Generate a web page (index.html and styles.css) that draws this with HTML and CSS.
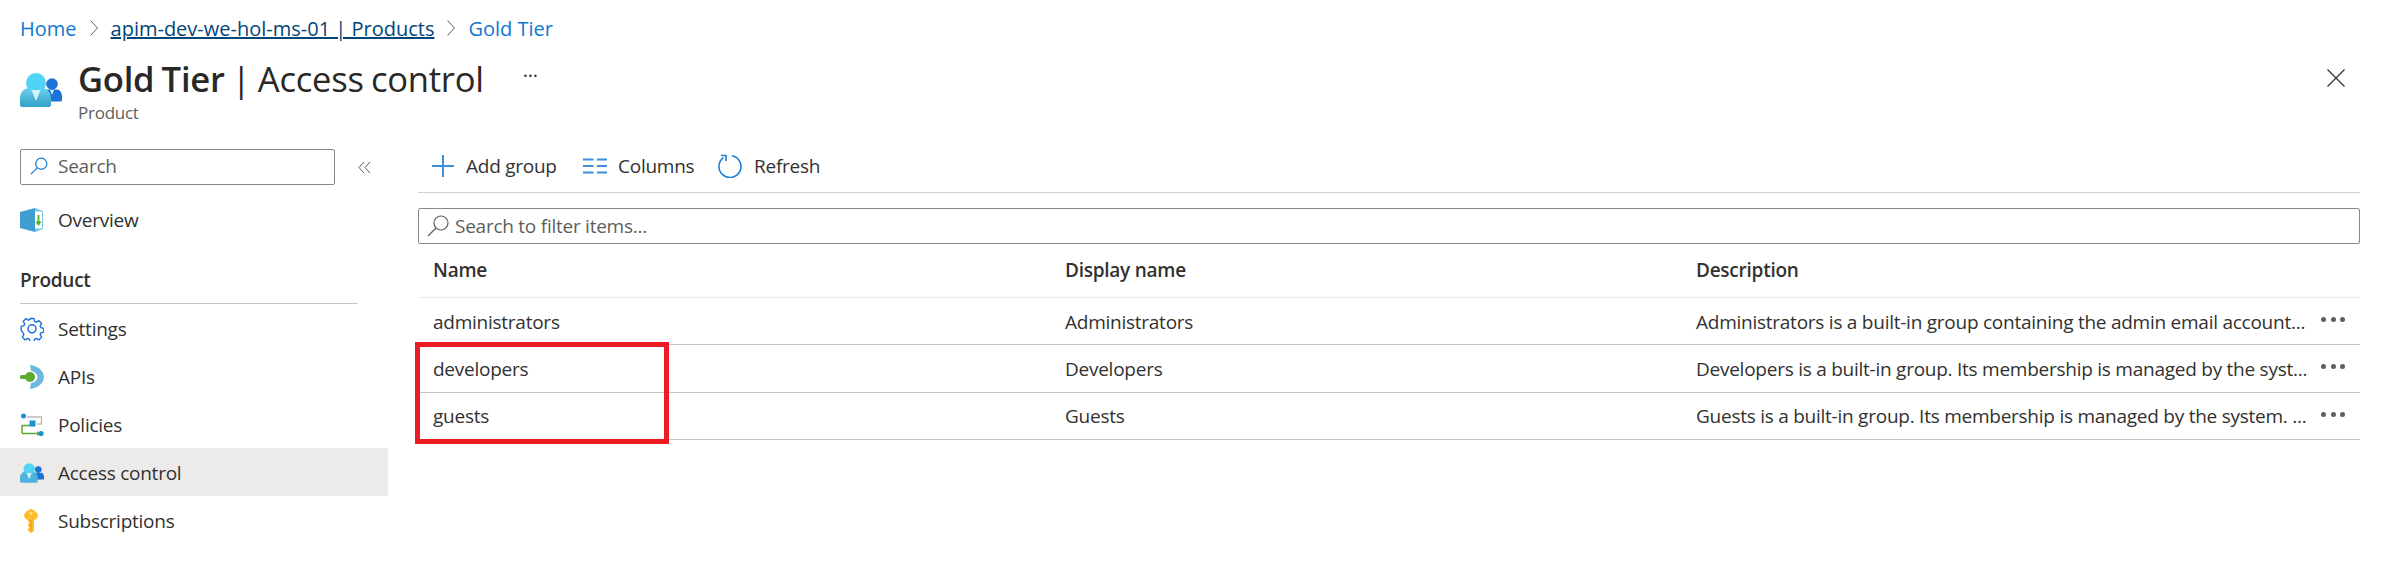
FILE: index.html
```html
<!DOCTYPE html>
<html lang="en">
<head>
    <meta charset="UTF-8">
    <title>Gold Tier - Access control</title>
    <link rel="stylesheet" href="styles.css">
</head>
<body>

<nav class="breadcrumb">
    <a class="crumb" href="#">Home</a>
    <svg class="crumb-sep" viewBox="0 0 10 18"><path d="M1.500 1.500 8.500 9l-7 7.500"/></svg>
    <a class="crumb crumb-current" href="#">apim-dev-we-hol-ms-01 | Products</a>
    <svg class="crumb-sep" viewBox="0 0 10 18"><path d="M1.500 1.500 8.500 9l-7 7.500"/></svg>
    <a class="crumb" href="#">Gold Tier</a>
</nav>

<header class="title-bar">
    <svg class="title-icon" viewBox="0 0 42 34">
        <defs>
            <linearGradient id="bodyFill" x1="0" y1="0" x2="0" y2="1">
                <stop offset="0" stop-color="#6bd0ee"/>
                <stop offset="1" stop-color="#32a0c8"/>
            </linearGradient>
        </defs>
        <circle cx="32" cy="11" r="5.800" fill="#1b74d4"/>
        <path d="M22 21c1-3 3-4.500 5-4.500h10c3 0 5 3 5 8.500v2a1.500 1.500 0 0 1-1.500 1.500H26z" fill="#1b74d4"/>
        <path d="M30 17h4l-2 5z" fill="#cfe6fa"/>
        <path d="M0 32v-6c0-7 4-11 9-11h13c5 0 9 4 9 11v6a2 2 0 0 1-2 2H2a2 2 0 0 1-2-2z" fill="url(#bodyFill)"/>
        <circle cx="16" cy="10" r="10" fill="#50d4f5"/>
        <path d="M11.500 17h9L16 28z" fill="#d6f1fa"/>
    </svg>
    <div class="title-text">
        <h1><strong>Gold Tier</strong> | Access control</h1>
        <p>Product</p>
    </div>
    <span class="title-more">...</span>
    <svg class="close-icon" viewBox="0 0 18 18"><path d="M.5.500l17 17M17.500.500l-17 17"/></svg>
</header>

<div class="layout">
    <aside class="sidebar">
        <div class="side-top">
            <div class="search-box">
                <svg class="search-icon" viewBox="0 0 20 20"><circle cx="12.500" cy="7.500" r="6.200"/><path d="M8 12 1 19"/></svg>
                <span>Search</span>
            </div>
            <svg class="collapse" viewBox="0 0 13 13"><path d="M6 1 1 6.500 6 12M12 1 7 6.500 12 12"/></svg>
        </div>

        <a class="nav-item" href="#">
            <svg class="nav-icon" viewBox="0 0 24 24">
                <path d="M0 4 15 0v24L0 20z" fill="#3f9ed0"/>
                <path d="M15 0l8 3v18l-8 3z" fill="#7cc4e4"/>
                <path d="M15 3.500h7v17h-7z" fill="#fff"/>
                <path d="M18.500 7v9M16.500 13.500l2 3 2-3" fill="none" stroke="#5ea92f" stroke-width="1.800"/>
            </svg>
            Overview
        </a>

        <h2 class="nav-heading">Product</h2>

        <a class="nav-item" href="#">
            <svg class="nav-icon" viewBox="0 0 24 24">
                <path d="M9.800 1h4.400l.7 3.200 2 .9 2.800-1.700 3 3.100-1.700 2.700.9 2 3.100.8v4.200l-3.100.8-.9 2 1.700 2.700-3 3.100-2.800-1.700-2 .9-.7 3.200H9.800l-.7-3.200-2-.9-2.800 1.700-3-3.100 1.700-2.700-.9-2L-.1 14V9.800L3 9l.9-2L2.200 4.300l3-3.100L8 2.900l2-.9z" transform="translate(1.200 .6) scale(.9)" fill="none" stroke="#1b6fd8" stroke-width="1.500" stroke-linejoin="round"/>
                <circle cx="12" cy="11.800" r="4" fill="none" stroke="#1b6fd8" stroke-width="1.500"/>
            </svg>
            Settings
        </a>
        <a class="nav-item" href="#">
            <svg class="nav-icon" viewBox="0 0 24 24">
                <path d="M10 0c7 .5 14 5.500 14 12s-7 11.500-14 12l1-6c3.500-.5 6.500-3 6.500-6S14.500 6.500 11 6z" fill="#6cb8de"/>
                <circle cx="10" cy="12" r="5" fill="#5ea92f"/>
                <rect x="0" y="10" width="8" height="4" rx="1.500" fill="#5ea92f"/>
            </svg>
            APIs
        </a>
        <a class="nav-item" href="#">
            <svg class="nav-icon" viewBox="0 0 24 24">
                <path d="M7 4h14.500v7H17" fill="none" stroke="#b8b8b8" stroke-width="1.300"/>
                <path d="M2 20v-7.500h8M2 20.500h17" fill="none" stroke="#5ea92f" stroke-width="1.500"/>
                <path d="M17 18l3 2.500-3 2.500z" fill="#5ea92f"/>
                <circle cx="3.500" cy="3" r="2.500" fill="#1c8fd0"/>
                <rect x="9.500" y="7.500" width="6" height="6" fill="#1c8fd0"/>
                <circle cx="21" cy="20.500" r="2.600" fill="#1c8fd0"/>
            </svg>
            Policies
        </a>
        <a class="nav-item nav-item-active" href="#">
            <svg class="nav-icon" viewBox="0 0 42 34">
                <circle cx="32" cy="11" r="5.800" fill="#1b74d4"/>
                <path d="M22 21c1-3 3-4.500 5-4.500h10c3 0 5 3 5 8.500v2a1.500 1.500 0 0 1-1.500 1.500H26z" fill="#1b74d4"/>
                <path d="M0 32v-6c0-7 4-11 9-11h13c5 0 9 4 9 11v6a2 2 0 0 1-2 2H2a2 2 0 0 1-2-2z" fill="#4cb4dc"/>
                <circle cx="16" cy="10" r="10" fill="#50d4f5"/>
                <path d="M11.500 17h9L16 28z" fill="#d6f1fa"/>
            </svg>
            Access control
        </a>
        <a class="nav-item" href="#">
            <svg class="nav-icon" viewBox="0 0 24 24">
                <path d="M11 0c2 0 7 4 7 6.500 0 2.500-2.500 4-4 4.800V22l-3 2-3-2.500V20l1.500-1.500L8 17v-1.500l1.500-1.500L8 12.500v-1.200C6.500 10.500 4 9 4 6.500 4 4 9 0 11 0z" fill="#fbbd2c"/>
                <path d="M11 11v11" stroke="#f0a31e" stroke-width="1.500"/>
                <circle cx="11" cy="4" r="1.500" fill="#ffe08a"/>
            </svg>
            Subscriptions
        </a>
    </aside>

    <main class="content">
        <div class="toolbar">
            <button class="tool tool-add">
                <svg class="tool-icon" viewBox="0 0 24 24"><path d="M12 1v22M1 12h22"/></svg>
                Add group
            </button>
            <button class="tool tool-columns">
                <svg class="tool-icon" viewBox="0 0 24 24"><path d="M0 5.500h10.500M0 12h10.500M0 18.500h10.500M14 5.500h10M14 12h10M14 18.500h10"/></svg>
                Columns
            </button>
            <button class="tool tool-refresh">
                <svg class="tool-icon icon-thin" viewBox="0 0 24 24"><path d="M14 1.700a11 11 0 1 1-8.500 1.900M3 1.500h5v5.500"/></svg>
                Refresh
            </button>
        </div>

        <div class="filter-box">
            <svg class="filter-icon" viewBox="0 0 22 22"><circle cx="14" cy="8" r="7"/><path d="M9 13 1 21"/></svg>
            <span>Search to filter items...</span>
        </div>

        <div class="table">
            <div class="row row-head">
                <div>Name</div>
                <div>Display name</div>
                <div>Description</div>
            </div>
            <div class="row">
                <div>administrators</div>
                <div>Administrators</div>
                <div>Administrators is a built-in group containing the admin email account...</div>
                <span class="row-more"><i></i><i></i><i></i></span>
            </div>
            <div class="row">
                <div>developers</div>
                <div>Developers</div>
                <div>Developers is a built-in group. Its membership is managed by the syst...</div>
                <span class="row-more"><i></i><i></i><i></i></span>
            </div>
            <div class="row">
                <div>guests</div>
                <div>Guests</div>
                <div>Guests is a built-in group. Its membership is managed by the system. ...</div>
                <span class="row-more"><i></i><i></i><i></i></span>
            </div>
            <div class="callout"></div>
        </div>
    </main>
</div>

</body>
</html>
```

FILE: styles.css
```css
html, body {
    margin: 0;
    height: 568px;
    overflow: hidden;
}

body {
    font-family: "Open Sans", "Noto Sans", sans-serif;
    font-size: 19px;
    letter-spacing: -0.25px;
    color: #323130;
    background-color: white;
}

a {
    color: inherit;
    text-decoration: none;
}

.breadcrumb {
    display: flex;
    align-items: center;
    height: 56px;
    padding-left: 20px;
    font-size: 20px;
    letter-spacing: 0;
}

.crumb {
    color: #0f78d4;
}

.crumb-current {
    color: #004578;
    text-decoration: underline;
}

.crumb-sep {
    width: 10px;
    height: 18px;
    margin: 0 12px 0 12px;
    fill: none;
    stroke: #605e5c;
    stroke-width: 1;
}

.title-bar {
    display: flex;
    align-items: flex-start;
    height: 84px;
    padding-left: 20px;
}

.title-icon {
    width: 42px;
    height: 34px;
    margin: 17px 16px 0 0;
    flex: none;
}

h1 {
    margin: 0;
    font-size: 34.600px;
    font-weight: 400;
    word-spacing: -1.500px;
    line-height: 45px;
    color: #292827;
}

h1 strong {
    font-weight: 600;
}

.title-text p {
    margin: 0;
    font-size: 17px;
    line-height: 24px;
    color: #605e5c;
}

.title-more {
    margin: 2px 0 0 39px;
    font-size: 20px;
    line-height: 24px;
}

.close-icon {
    width: 18px;
    height: 18px;
    margin: 13px 43px 0 auto;
    fill: none;
    stroke: #323130;
    stroke-width: 1.200;
}

.layout {
    display: flex;
    align-items: flex-start;
}

.sidebar {
    width: 388px;
    flex: none;
    padding-top: 9px;
}

.side-top {
    display: flex;
    align-items: center;
    padding-left: 20px;
    margin-bottom: 10px;
}

.search-box {
    display: flex;
    align-items: center;
    box-sizing: border-box;
    width: 315px;
    height: 36px;
    padding-left: 9px;
    padding-bottom: 2px;
    border: 1px solid #8a8886;
    border-radius: 2px;
    color: #605e5c;
}

.search-icon {
    width: 18px;
    height: 18px;
    margin-right: 10px;
    fill: none;
    stroke: #0f78d4;
    stroke-width: 1.300;
}

.collapse {
    width: 13px;
    height: 13px;
    margin-left: 23px;
    fill: none;
    stroke: #605e5c;
    stroke-width: 1;
}

.nav-item {
    display: flex;
    align-items: center;
    box-sizing: border-box;
    height: 48px;
    padding: 1px 0 0 20px;
    gap: 14px;
}

.nav-item-active {
    background-color: #edebe9;
}

.nav-icon {
    width: 24px;
    height: 24px;
    flex: none;
}

.nav-heading {
    display: flex;
    align-items: center;
    box-sizing: border-box;
    height: 61px;
    margin: 0 30px 0 20px;
    padding-top: 13px;
    border-bottom: 1px solid #c8c6c4;
    font-size: 19px;
    font-weight: 600;
}

.content {
    flex: 1;
    min-width: 0;
    margin-right: 28px;
    margin-left: 30px;
}

.toolbar {
    display: flex;
    align-items: center;
    box-sizing: border-box;
    height: 53px;
    padding-left: 13px;
    border-bottom: 1px solid #d2d0ce;
}

.tool {
    display: flex;
    align-items: center;
    gap: 11px;
    padding: 0 0 1px;
    border: none;
    background: transparent;
    font: inherit;
    letter-spacing: inherit;
    color: inherit;
}

.tool-add {
    width: 152px;
}

.tool-columns {
    width: 135px;
}

.tool-refresh {
    gap: 12px;
}

.tool-icon {
    width: 24px;
    height: 24px;
    fill: none;
    stroke: #3e8fdc;
    stroke-width: 2;
}

.icon-thin {
    stroke: #1b7fd8;
    stroke-width: 1.600;
}

.filter-box {
    display: flex;
    align-items: center;
    box-sizing: border-box;
    height: 36px;
    margin-top: 15px;
    padding-left: 8px;
    padding-bottom: 1px;
    border: 1px solid #8a8886;
    border-radius: 2px;
    color: #605e5c;
}

.filter-icon {
    width: 22px;
    height: 22px;
    margin-right: 6px;
    fill: none;
    stroke: #605e5c;
    stroke-width: 1.200;
}

.table {
    position: relative;
}

.row {
    display: grid;
    grid-template-columns: 632px 631px 1fr;
    align-items: center;
    position: relative;
    box-sizing: border-box;
    height: 47.330px;
    padding-left: 15px;
    padding-top: 1px;
    border-bottom: 1px solid #c8c6c4;
    white-space: nowrap;
}

.row-head {
    height: 54px;
    padding-top: 0;
    padding-bottom: 2px;
    border-bottom-color: #edebe9;
    font-weight: 600;
}

.row-more {
    position: absolute;
    top: 19px;
    right: 15px;
    display: flex;
    gap: 4.500px;
}

.row-more i {
    width: 5px;
    height: 5px;
    border-radius: 50%;
    background-color: #605e5c;
}

.callout {
    position: absolute;
    left: -3px;
    top: 98px;
    width: 254px;
    height: 102px;
    box-sizing: border-box;
    border: 5px solid #ed1c24;
}
```
